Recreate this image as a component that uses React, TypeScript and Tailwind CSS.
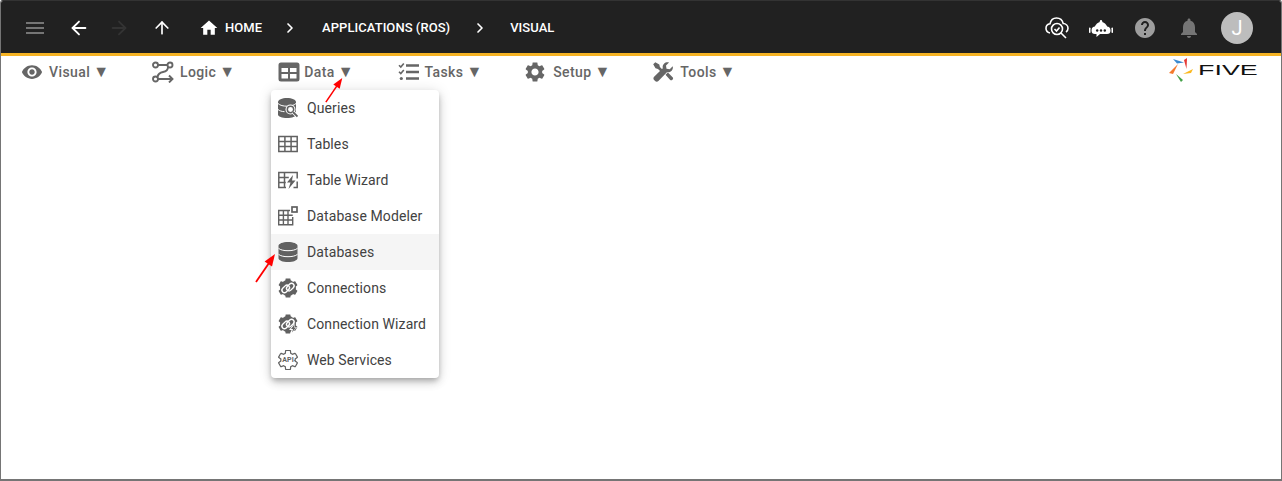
import { ReactNode } from 'react';
import { ArrowLeft, ArrowRight, ArrowUp, ChevronRight } from 'lucide-react';

const Mdi = ({ d, size = 24, className = '' }: { d: string; size?: number; className?: string }) => (
  <svg width={size} height={size} viewBox="0 0 24 24" fill="currentColor" className={className}>
    <path d={d} />
  </svg>
);

const paths = {
  menu: 'M3 6h18v2H3V6m0 5h18v2H3v-2m0 5h18v2H3v-2z',
  home: 'M10 20v-6h4v6h5v-8h3L12 3 2 12h3v8h5z',
  help: 'M12 2C6.48 2 2 6.48 2 12s4.48 10 10 10 10-4.48 10-10S17.52 2 12 2zm1 17h-2v-2h2v2zm2.07-7.75l-.9.92C13.45 12.9 13 13.5 13 15h-2v-.5c0-1.1.45-2.1 1.17-2.83l1.24-1.26c.37-.36.59-.86.59-1.41 0-1.1-.9-2-2-2s-2 .9-2 2H8c0-2.21 1.79-4 4-4s4 1.79 4 4c0 .88-.36 1.68-.93 2.25z',
  bell: 'M12 22c1.1 0 2-.9 2-2h-4c0 1.1.9 2 2 2zm6-6v-5c0-3.07-1.63-5.64-4.5-6.32V4c0-.83-.67-1.5-1.5-1.5s-1.5.67-1.5 1.5v.68C7.64 5.36 6 7.92 6 11v5l-2 2v1h16v-1l-2-2z',
  eye: 'M12 4.5C7 4.5 2.73 7.61 1 12c1.73 4.39 6 7.5 11 7.5s9.27-3.11 11-7.5c-1.73-4.39-6-7.5-11-7.5zM12 17c-2.76 0-5-2.24-5-5s2.24-5 5-5 5 2.24 5 5-2.24 5-5 5zm0-8c-1.66 0-3 1.34-3 3s1.34 3 3 3 3-1.34 3-3-1.34-3-3-3z',
  gear: 'M19.14 12.94c.04-.3.06-.61.06-.94 0-.32-.02-.64-.07-.94l2.03-1.58c.18-.14.23-.41.12-.61l-1.92-3.32c-.12-.22-.37-.29-.59-.22l-2.39.96c-.5-.38-1.03-.7-1.62-.94l-.36-2.54c-.04-.24-.24-.41-.48-.41h-3.84c-.24 0-.43.17-.47.41l-.36 2.54c-.59.24-1.13.57-1.62.94l-2.39-.96c-.22-.08-.47 0-.59.22L2.74 8.87c-.12.21-.08.47.12.61l2.03 1.58c-.05.3-.09.63-.09.94s.02.64.07.94l-2.03 1.58c-.18.14-.23.41-.12.61l1.92 3.32c.12.22.37.29.59.22l2.39-.96c.5.38 1.03.7 1.62.94l.36 2.54c.05.24.24.41.48.41h3.84c.24 0 .44-.17.47-.41l.36-2.54c.59-.24 1.13-.56 1.62-.94l2.39.96c.22.08.47 0 .59-.22l1.92-3.32c.12-.22.07-.47-.12-.61l-2.01-1.58zM12 15.6c-1.98 0-3.6-1.62-3.6-3.6s1.62-3.6 3.6-3.6 3.6 1.62 3.6 3.6-1.62 3.6-3.6 3.6z',
};

const LogicIcon = () => (
  <svg width="22" height="22" viewBox="0 0 22 22" fill="none" stroke="currentColor" strokeWidth="1.9">
    <circle cx="3.5" cy="4" r="2.5" />
    <circle cx="18" cy="4" r="2.5" />
    <circle cx="3.5" cy="18" r="2.5" />
    <path d="M6 4h9.500M16 6c0 3-2 4.500-5 5s-5 2-5.500 5M6 18h14M17 14.500l3.500 3.500-3.500 3.500" />
  </svg>
);

const DataIcon = () => (
  <svg width="22" height="22" viewBox="0 0 22 22" fill="currentColor">
    <path fillRule="evenodd" d="M3 1.500h16A2.500 2.500 0 0 1 21.500 4v14a2.500 2.500 0 0 1-2.500 2.500H3A2.500 2.500 0 0 1 .5 18V4A2.500 2.500 0 0 1 3 1.500zM3.500 7v4h6.500V7zm8.500 0v4h6.500V7zM3.500 13v4.500h6.500V13zm8.500 0v4.500h6.500V13z" />
  </svg>
);

const TasksIcon = () => (
  <svg width="22" height="22" viewBox="0 0 22 22" fill="none" stroke="currentColor">
    <path strokeWidth="2.400" d="M8 4.500h13M8 11h13M8 17.500h13" />
    <path strokeWidth="1.600" d="M1 4.300l1.800 1.800 3-3.600M1 10.800l1.800 1.800 3-3.600" />
    <circle cx="3.300" cy="17.500" r="1.600" fill="currentColor" stroke="none" />
  </svg>
);

const ToolsIcon = () => (
  <svg width="22" height="22" viewBox="0 0 22 22" fill="currentColor">
    <path d="M1.200 3.300L3.300 1.200l4 2.300.6 2.500 4.900 4.900-1.900 1.900L6 8 3.500 7.300z" />
    <path d="M20.700 5.200c.5 1.800 0 3.600-1.300 4.800-1.200 1.200-2.900 1.600-4.500 1.200L6.400 20c-.9.900-2.400.9-3.300 0l-1-1c-.9-.9-.9-2.400 0-3.300l8.700-8.500c-.4-1.600 0-3.300 1.200-4.500C13.300 1.500 15.200 1 17 1.500l-3 3 .5 3.200 3.200.5z" />
    <path d="M13.500 13.800l2.400-2.300 4.700 4.700c.7.700.7 1.700 0 2.400l-.2.200c-.7.700-1.700.7-2.400 0z" />
  </svg>
);

const CloudSearchIcon = () => (
  <svg width="24" height="24" viewBox="0 0 24 24" fill="none" stroke="currentColor" strokeWidth="1.600">
    <path d="M5 17C2.500 16.500 1 14.500 1 12.300c0-2.300 1.700-4.200 4-4.500C5.800 4 8.500 2 11.500 2c3.300 0 6 2.300 6.700 5.500 2.700.2 4.800 2.200 4.800 4.700 0 1.600-.8 3-2 3.800" />
    <circle cx="12" cy="13" r="5.500" />
    <path d="M9.500 13l2 2 3-3.500M16 17l5 5" />
  </svg>
);

const BotIcon = () => (
  <svg width="24" height="24" viewBox="0 0 24 24" fill="currentColor">
    <circle cx="12" cy="5.200" r="1.200" />
    <path d="M5.500 12c.5-3.300 3.300-6 6.500-6s6 2.700 6.500 6z" />
    <path d="M6.500 10.500h11a4 4 0 0 1 4 4 3.500 3.500 0 0 1-3.500 3.500h-7l-3.500 3v-3H6a3.500 3.500 0 0 1-3.500-3.500 4 4 0 0 1 4-4z" />
    <rect x="0" y="11.500" width="1.500" height="5.500" rx=".7" />
    <rect x="22.500" y="11.500" width="1.500" height="5.500" rx=".7" />
    <circle cx="8.200" cy="14.500" r="1.200" fill="#212121" />
    <circle cx="12" cy="14.500" r="1.200" fill="#212121" />
    <circle cx="15.800" cy="14.500" r="1.200" fill="#212121" />
  </svg>
);

const QueriesIcon = () => (
  <svg width="20" height="20" viewBox="0 0 20 20">
    <path fill="currentColor" d="M0 4c0-2.200 4-4 9-4s9 1.800 9 4v12.500c0 2-4 3.500-9 3.500s-9-1.500-9-3.500z" />
    <path fill="none" stroke="#fff" strokeWidth="1" d="M0 5.500c2 2 5.500 2.700 9 2.700s7-.7 9-2.700M0 11.500c1.500 1.300 3.500 2 6.500 2.200" />
    <circle cx="12.500" cy="11.500" r="5" fill="#fff" />
    <circle cx="12.500" cy="11.500" r="3.200" fill="none" stroke="currentColor" strokeWidth="1.500" />
    <path d="M15 14l4.500 4.500" stroke="#fff" strokeWidth="3.500" />
    <path d="M15 14l4.500 4.500" stroke="currentColor" strokeWidth="1.800" />
  </svg>
);

const TablesIcon = () => (
  <svg width="20" height="20" viewBox="0 0 20 20" fill="none" stroke="currentColor" strokeWidth="1.500">
    <path d="M.8 2.500h18.400v15H.8zM.8 7.500h18.400M.8 12.500h18.400M6.900 2.500v15M13.100 2.500v15" />
  </svg>
);

const TableWizardIcon = () => (
  <svg width="20" height="20" viewBox="0 0 20 20">
    <path fill="none" stroke="currentColor" strokeWidth="1.500" d="M8 17.500H.8V2.500h18.400v6M.8 7.500h10M.8 12.500h7M6.500 2.500v15" />
    <path fill="currentColor" d="M15 5L9 12.500h3.500L10.500 19l7-8.500h-3.500z" />
    <path fill="none" stroke="currentColor" strokeWidth="1.500" d="M19.200 11.500v6H15.500" />
  </svg>
);

const ModelerIcon = () => (
  <svg width="20" height="20" viewBox="0 0 20 20" fill="none" stroke="currentColor" strokeWidth="1.400">
    <path d="M12 4.500H.7v14.200h14V11M.7 9.200h14M.7 14h14M5.400 4.500v14.200M10 4.500v14.200" />
    <rect x="14" y="1" width="5" height="5" strokeWidth="1.700" />
  </svg>
);

const DatabaseIcon = () => (
  <svg width="20" height="20" viewBox="0 0 20 20">
    <path fill="currentColor" d="M.5 3.800C.5 1.700 4.700 0 10 0s9.500 1.700 9.500 3.800v12.400c0 2.100-4.200 3.800-9.500 3.800S.5 18.300.5 16.200z" />
    <path fill="none" stroke="#fff" strokeWidth="1" d="M.5 6.300C2.500 8 5.800 8.700 10 8.700s7.500-.7 9.500-2.400M.5 12.300c2 1.700 5.300 2.400 9.500 2.400s7.500-.7 9.500-2.400" />
  </svg>
);

const ConnectionsIcon = ({ wizard = false }: { wizard?: boolean }) => (
  <svg width="20" height="20" viewBox="2 2 20 20">
    <path fill="currentColor" d={paths.gear} />
    <circle cx="12" cy="12" r="8" fill="currentColor" />
    <g transform="rotate(-45 12 12)" fill="none" stroke="#fff" strokeWidth="1.400">
      <rect x="5.500" y="8.500" width="8.500" height="5" rx="2.500" />
      <rect x="10" y="10.500" width="8.500" height="5" rx="2.500" />
    </g>
    {wizard && <path fill="#fff" d="M18.500 11l-5.500 7h2.500l-1.500 5 7-8h-2.500z" />}
    {wizard && <path fill="currentColor" d="M18 13l-3 4h2l-1 3.500 4-5h-2z" />}
  </svg>
);

const ApiIcon = () => (
  <svg width="20" height="20" viewBox="2 2 20 20">
    <path fill="none" stroke="currentColor" strokeWidth="1.200" d="M19.140 12.940l2.020 1.580c.19.140.24.390.12.610l-1.920 3.320c-.12.220-.37.300-.59.220l-2.390-.96c-.49.380-1.030.700-1.620.940l-.36 2.540c-.03.240-.23.410-.47.410h-3.840c-.24 0-.43-.17-.48-.41l-.36-2.540c-.59-.24-1.120-.56-1.620-.94l-2.390.96c-.22.070-.47 0-.59-.22l-1.920-3.320c-.11-.20-.06-.47.12-.61l2.030-1.580c-.05-.30-.07-.63-.07-.94s.04-.64.09-.94L2.860 9.480c-.2-.14-.24-.40-.12-.61l1.920-3.320c.12-.22.37-.30.59-.22l2.390.96c.49-.37 1.030-.7 1.620-.94l.36-2.540c.04-.24.23-.41.47-.41h3.840c.24 0 .44.17.48.41l.36 2.540c.59.240 1.120.56 1.620.94l2.390-.96c.22-.07.47 0 .59.22l1.920 3.320c.11.200.06.470-.12.610l-2.030 1.580c.05.3.07.62.07.94 0 .33-.02.64-.06.940z" />
    <text x="12" y="14.300" textAnchor="middle" fontSize="7" fontWeight="700" fontFamily="Roboto, sans-serif" fill="currentColor">API</text>
  </svg>
);

const Logo = () => (
  <div className="flex items-center">
    <svg width="25" height="26" viewBox="0 0 25 26" className="shrink-0">
      <path d="M4 2l11 3.500-7 1z" fill="#3b8ad0" />
      <path d="M15 3l3-2-.5 11z" fill="#e53935" />
      <path d="M14 17l10-5-2 4z" fill="#fbb81f" />
      <path d="M7 17l7 6-2 2z" fill="#43a047" />
      <path d="M9 7L0 16l4 1z" fill="#f4792b" />
    </svg>
    <span className="ml-[4px] text-[14px] leading-none text-[#111] [font-family:'Liberation_Sans',sans-serif] scale-x-[1.920] origin-left">
      FIVE
    </span>
  </div>
);

const TopItem = ({ icon, label, className }: { icon: ReactNode; label: string; className: string }) => (
  <div className={`flex items-center text-[#666] ${className}`}>
    {icon}
    <span className="text-sm font-medium tracking-[0.4px]">{label}</span>
    <span className="ml-[3px] text-base leading-none">▼</span>
  </div>
);

const menuItems: { label: string; icon: ReactNode; active?: boolean }[] = [
  { label: 'Queries', icon: <QueriesIcon /> },
  { label: 'Tables', icon: <TablesIcon /> },
  { label: 'Table Wizard', icon: <TableWizardIcon /> },
  { label: 'Database Modeler', icon: <ModelerIcon /> },
  { label: 'Databases', icon: <DatabaseIcon />, active: true },
  { label: 'Connections', icon: <ConnectionsIcon /> },
  { label: 'Connection Wizard', icon: <ConnectionsIcon wizard /> },
  { label: 'Web Services', icon: <ApiIcon /> },
];

const RedArrow = ({ className, width, height }: { className: string; width: number; height: number }) => (
  <svg width={width} height={height} viewBox="0 0 22 30" className={`absolute ${className}`}>
    <path d="M1 29L14 10" stroke="#f00" strokeWidth="1.800" />
    <path d="M20 1L17 13.500 9.600 8.500z" fill="#f00" />
  </svg>
);

export default function App() {
  return (
    <div className="relative w-[1282px] h-[481px] overflow-hidden rounded-t-[3px] bg-white border border-[#757575] border-t-[#333] border-b-2 [font-family:Roboto,sans-serif]">
      <header className="h-[52px] pt-[1px] bg-[#212121] flex items-center text-white">
        <Mdi d={paths.menu} className="ml-[22px] text-[#757575]" />
        <ArrowLeft size={22} strokeWidth={2} className="ml-[21px]" />
        <ArrowRight size={22} strokeWidth={2} className="ml-[18px] text-[#333]" />
        <ArrowUp size={20} strokeWidth={2} className="ml-[22px]" />
        <Mdi d={paths.home} size={20} className="ml-[27px]" />
        <span className="ml-[6px] mt-[1px] text-[13px] font-medium tracking-[0.05px]">HOME</span>
        <ChevronRight size={16} strokeWidth={2.5} className="ml-[20px]" />
        <span className="ml-[24px] mt-[1px] text-[13px] font-medium tracking-[0.05px]">APPLICATIONS (ROS)</span>
        <ChevronRight size={16} strokeWidth={2.5} className="ml-[22px]" />
        <span className="ml-[22px] mt-[1px] text-[13px] font-medium tracking-[0.05px]">VISUAL</span>
        <div className="ml-auto flex items-center mr-[28px]">
          <CloudSearchIcon />
          <div className="ml-[20px]"><BotIcon /></div>
          <Mdi d={paths.help} className="ml-[20px] text-[#9e9e9e]" />
          <Mdi d={paths.bell} className="ml-[20px] text-[#757575]" />
          <div className="ml-[20px] w-8 h-8 rounded-full bg-[#bdbdbd] flex items-center justify-center text-xl">J</div>
        </div>
      </header>
      <div className="h-[3px] bg-[#f5b324]" />
      <nav className="h-8 flex items-center">
        <TopItem className="ml-[20px]" icon={<Mdi d={paths.eye} size={22} className="mr-[6px]" />} label="Visual" />
        <TopItem className="ml-[43px]" icon={<div className="mr-[6px]"><LogicIcon /></div>} label="Logic" />
        <TopItem className="ml-[43px]" icon={<div className="mr-[4px]"><DataIcon /></div>} label="Data" />
        <TopItem className="ml-[45px]" icon={<div className="mr-[4px]"><TasksIcon /></div>} label="Tasks" />
        <TopItem className="ml-[41px]" icon={<Mdi d={paths.gear} size={24} className="mr-[6px]" />} label="Setup" />
        <TopItem className="ml-[42px]" icon={<div className="mr-[6px]"><ToolsIcon /></div>} label="Tools" />
        <div className="ml-auto mr-[24px] w-[88px] mt-[-4px]"><Logo /></div>
      </nav>
      <ul className="absolute left-[270px] top-[89px] w-[168px] bg-white rounded-[4px] shadow-[0_3px_5px_-1px_rgba(0,0,0,0.2),0_5px_8px_0_rgba(0,0,0,0.14),0_1px_14px_0_rgba(0,0,0,0.12)]">
        {menuItems.map((item) => (
          <li key={item.label} className={`h-9 flex items-center pl-[7px] text-sm tracking-[0.1px] text-[#424242] ${item.active ? 'bg-[#f5f5f5]' : ''}`}>
            <span className="w-[29px] shrink-0 text-[#616161]">{item.icon}</span>
            <span>{item.label}</span>
          </li>
        ))}
      </ul>
      <RedArrow className="left-[324px] top-[76px]" width={19} height={26} />
      <RedArrow className="left-[254px] top-[252px]" width={22} height={30} />
    </div>
  );
}
